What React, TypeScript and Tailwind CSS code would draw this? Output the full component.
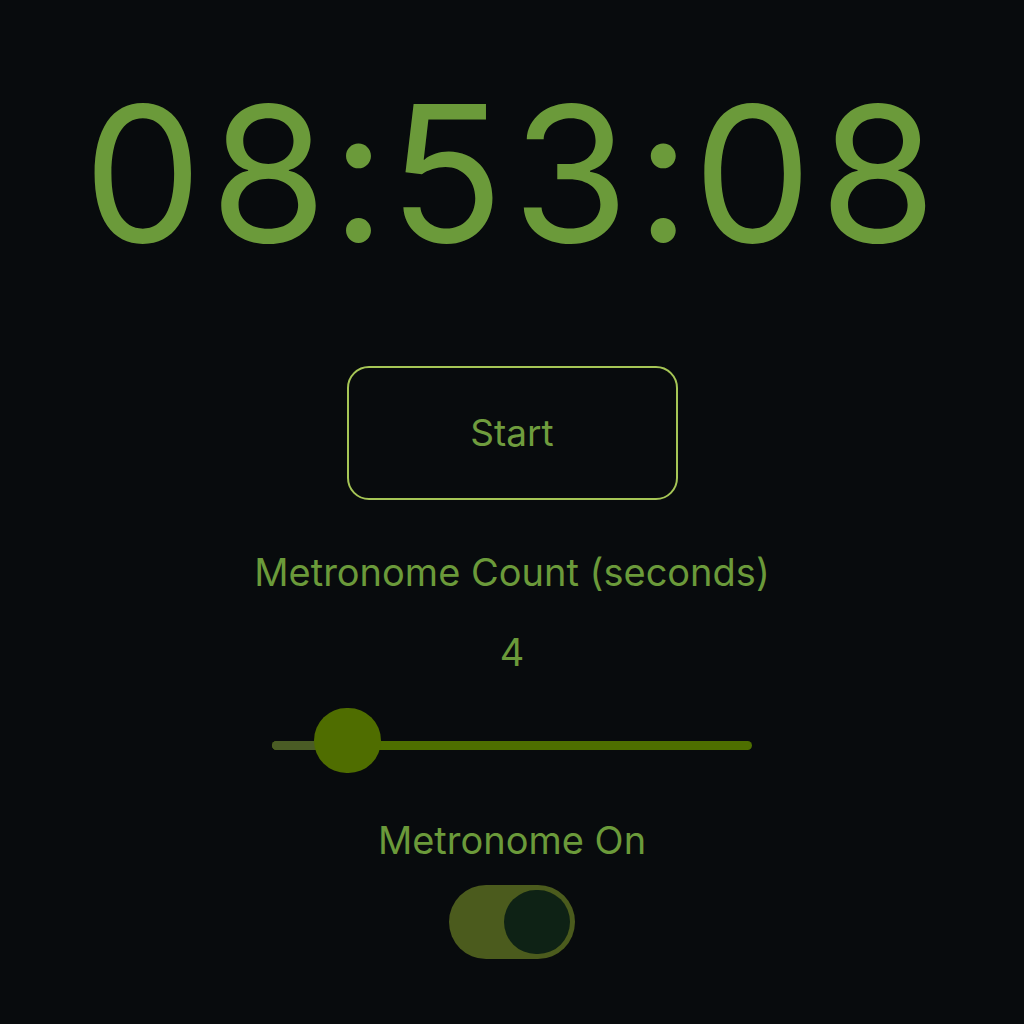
import React, { useState } from "react";

export default function App() {
  const [on, setOn] = useState(true);
  const value = 4;
  const pct = ((value - 1) / (30 - 1)) * 100;
  return (
    <div
      className="w-[1024px] h-[1024px] bg-[#080b0d] flex flex-col items-center text-[#6b9a3a] overflow-hidden"
      style={{ fontFamily: "Inter, 'Noto Sans', sans-serif" }}
    >
      <div className="mt-[64px] text-[189px] leading-[220px] tracking-[3px] tabular-nums">
        08:53:08
      </div>
      <button className="mt-[82px] w-[331px] h-[134px] rounded-[22px] border-2 border-[#a6c656] text-[37px] text-[#6f9c3e] flex items-center justify-center">
        Start
      </button>
      <div className="mt-[50px] text-[38px] leading-[44px]">Metronome Count (seconds)</div>
      <div className="mt-[36px] text-[38px] leading-[44px]">{value}</div>
      <div className="mt-[36px] relative w-[480px] h-[70px] flex items-center">
        <div className="w-full h-[9px] rounded-full bg-[#4e6f00] overflow-hidden flex">
          <div className="h-full bg-[#4a5c25]" style={{ width: `${pct}%` }} />
        </div>
        <div className="absolute left-[42px] top-[-2px] w-[67px] h-[65px] rounded-full bg-[#4f6d00]" />
      </div>
      <div className="mt-[38px] text-[38px] leading-[44px]">Metronome On</div>
      <button
        onClick={() => setOn(!on)}
        className="mt-[23px] w-[126px] h-[74px] rounded-full bg-[#4b5b1d] flex items-center justify-end px-[5px]"
      >
        <div className="w-[66px] h-[64px] rounded-full bg-[#0e2215]" />
      </button>
    </div>
  );
}
